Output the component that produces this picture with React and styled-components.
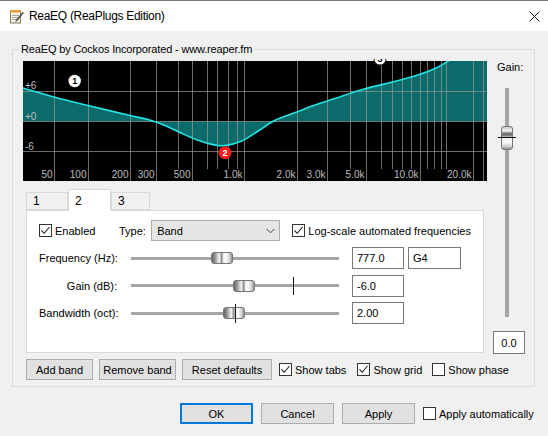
import styled, { createGlobalStyle } from "styled-components";

const GlobalStyle = createGlobalStyle`
  html, body { margin: 0; padding: 0; background: #f0f0f0; }
  body {
    font-family: "Liberation Sans", Arial, sans-serif;
    font-size: 11px;
    color: #000;
  }
`;

const Window = styled.div`
  width: 548px;
  height: 436px;
  display: flex;
  flex-direction: column;
  background: #f0f0f0;
  overflow: hidden;
`;

const TitleBar = styled.div`
  height: 30px;
  flex-shrink: 0;
  background: #fff;
  border-top: 1px solid #7a7a7a;
  display: flex;
  align-items: center;
  padding: 0 8px 0 9px;
`;

const TitleText = styled.span`
  flex: 1;
  margin-left: 5px;
  font-size: 12px;
  letter-spacing: -0.3px;
`;

const Group = styled.fieldset`
  margin: 12px 13px 0 12px;
  padding: 5px 3px 6px 10px;
  border: 1px solid #dcdcdc;
  min-width: 0;
`;

const Legend = styled.legend`
  padding: 0 2px;
  margin-left: -4px;
  line-height: 13px;
  letter-spacing: -0.15px;
`;

const GroupInner = styled.div`
  display: flex;
`;

const LeftCol = styled.div`
  width: 464px;
  flex-shrink: 0;
  display: flex;
  flex-direction: column;
`;

const RightCol = styled.div`
  width: 44px;
  display: flex;
  flex-direction: column;
  align-items: flex-start;
`;

const GraphSvg = styled.svg`
  display: block;
  overflow: visible;
`;

const TabStrip = styled.div`
  margin-top: 8px;
  height: 21px;
  display: flex;
  align-items: flex-end;
  padding-left: 3px;
`;

const Tab = styled.div`
  box-sizing: border-box;
  width: ${(p) => p.$w}px;
  height: ${(p) => (p.$active ? 22 : 18)}px;
  margin-bottom: ${(p) => (p.$active ? -1 : 0)}px;
  background: ${(p) => (p.$active ? "#fff" : "#f0f0f0")};
  border: 1px solid #d9d9d9;
  border-bottom: ${(p) => (p.$active ? "none" : "1px solid #d9d9d9")};
  position: relative;
  z-index: ${(p) => (p.$active ? 1 : 0)};
  display: flex;
  align-items: center;
  padding-left: 6px;
  font-size: 12px;
`;

const Panel = styled.div`
  margin: 0 3px;
  height: 143px;
  box-sizing: border-box;
  border: 1px solid #d9d9d9;
  background: #fff;
  padding: 9px 12px;
`;

const TopRow = styled.div`
  height: 21px;
  display: flex;
  align-items: center;
`;

const CheckLabel = styled.label`
  display: inline-flex;
  align-items: center;
  flex-shrink: 0;
  gap: 3px;
  width: ${(p) => (p.$w ? `${p.$w}px` : "auto")};
  margin-left: ${(p) => p.$ml || 0}px;
  white-space: nowrap;
`;

const Box = styled.span`
  width: 13px;
  height: 13px;
  box-sizing: border-box;
  border: 1px solid #333;
  background: #fff;
  display: inline-flex;
  align-items: center;
  justify-content: center;
  flex-shrink: 0;
`;

const TypeLabel = styled.span`
  width: 34px;
`;

const Dropdown = styled.div`
  width: 136px;
  height: 21px;
  box-sizing: border-box;
  background: #e5e5e5;
  border: 1px solid #adadad;
  display: flex;
  align-items: center;
  justify-content: space-between;
  padding: 0 4px 0 5px;
`;

const ParamGrid = styled.div`
  margin-top: 6px;
  display: grid;
  grid-template-columns: 79px 208px 52px 53px;
  grid-auto-rows: 22px;
  column-gap: 13px;
  row-gap: 5.5px;
  align-items: center;
  & > :nth-child(4n) { margin-left: -9px; }
`;

const ParamLabel = styled.span`
  text-align: right;
  padding-right: 1px;
  white-space: nowrap;
`;

const Track = styled.div`
  position: relative;
  height: 22px;
  display: flex;
  align-items: center;
  &::before {
    content: "";
    flex: 1;
    height: 3px;
    background: #a5a5a5;
  }
`;

const HThumb = styled.div`
  position: absolute;
  top: 5px;
  left: ${(p) => p.$left}px;
  width: 22px;
  height: 12px;
  box-sizing: border-box;
  border: 1px solid #767676;
  border-radius: 3px;
  background: linear-gradient(90deg, #6a6a6a 0%, #8e8e8e 14%, #d0d0d0 28%, #f4f4f4 38%, #8a8a8a 48%, #f2f2f2 58%, #fbfbfb 72%, #cfcfcf 88%, #909090 100%);
`;

const VTick = styled.div`
  position: absolute;
  left: ${(p) => p.$left}px;
  top: ${(p) => (22 - p.$h) / 2}px;
  width: 1px;
  height: ${(p) => p.$h}px;
  background: #111;
`;

const Field = styled.input`
  box-sizing: border-box;
  width: 100%;
  height: 22px;
  border: 1px solid #7a7a7a;
  background: #fff;
  font: inherit;
  padding: 0 4px;
  margin: 0;
  outline: none;
`;

const ButtonRow = styled.div`
  margin-top: 6px;
  height: 21px;
  display: flex;
  align-items: center;
  gap: 6px;
  padding-left: 3px;
`;

const Button = styled.button`
  box-sizing: border-box;
  flex-shrink: 0;
  width: ${(p) => p.$w}px;
  height: 21px;
  padding: 0;
  white-space: nowrap;
  font: inherit;
  color: #000;
  background: #e1e1e1;
  border: 1px solid ${(p) => (p.$default ? "#0078d7" : "#adadad")};
  box-shadow: ${(p) => (p.$default ? "inset 0 0 0 1px #0078d7" : "none")};
`;

const GainLabel = styled.span`
  margin-left: 10px;
  line-height: 13px;
`;

const VTrack = styled.div`
  position: relative;
  margin: 14px 0 0 18px;
  width: 4px;
  height: 229px;
  background: #a6a6a6;
`;

const VThumb = styled.div`
  position: absolute;
  left: -4px;
  top: 38px;
  width: 12px;
  height: 24px;
  box-sizing: border-box;
  border: 1px solid #767676;
  border-radius: 3px;
  background: linear-gradient(180deg, #c8c8c8 0%, #f4f4f4 18%, #6e6e6e 30%, #7c7c7c 38%, #f2f2f2 50%, #fafafa 70%, #cfcfcf 88%, #909090 100%);
`;

const HTick = styled.div`
  position: absolute;
  left: -7px;
  top: 49px;
  width: 18px;
  height: 1px;
  background: #111;
`;

const ValueBox = styled.div`
  margin: 14px 0 0 6px;
  width: 32px;
  height: 23px;
  box-sizing: border-box;
  border: 1px solid #7a7a7a;
  background: #fff;
  display: flex;
  align-items: center;
  justify-content: center;
`;

const DialogRow = styled.div`
  margin-top: 16px;
  height: 21px;
  display: flex;
  align-items: center;
  gap: 8px;
  padding-left: 180px;
`;

const Check = ({ checked, children, ...rest }) => (
  <CheckLabel {...rest}>
    <Box>
      {checked && (
        <svg width="11" height="11" viewBox="0 0 11 11">
          <path d="M1.5 5.5 L4.2 8.3 L9.5 2" fill="none" stroke="#222" strokeWidth="1.1" />
        </svg>
      )}
    </Box>
    {children}
  </CheckLabel>
);

// curve points relative to graph origin (23,61)
const CURVE = [
  [0, 27], [31, 36], [65, 44.5], [107, 54.5], [125, 58.6], [142, 64.5], [158, 72],
  [175, 79.3], [190, 83.6], [202, 84.6], [218.7, 80], [235.3, 70], [252, 59.3], [273.7, 51],
  [292, 44], [312, 37.5], [340.3, 28.3], [373.7, 20], [397, 13.3], [413.7, 6.7],
  [425.3, 0], [440, -10], [470, -30],
];

function smoothPath(pts) {
  let d = `M${pts[0][0]},${pts[0][1]}`;
  for (let i = 0; i < pts.length - 1; i++) {
    const p0 = pts[i - 1] || pts[i];
    const p1 = pts[i];
    const p2 = pts[i + 1];
    const p3 = pts[i + 2] || p2;
    const c1x = p1[0] + (p2[0] - p0[0]) / 6;
    const c1y = p1[1] + (p2[1] - p0[1]) / 6;
    const c2x = p2[0] - (p3[0] - p1[0]) / 6;
    const c2y = p2[1] - (p3[1] - p1[1]) / 6;
    d += ` C${c1x},${c1y} ${c2x},${c2y} ${p2[0]},${p2[1]}`;
  }
  return d;
}

const LABELED = [
  [54, "50"], [88, "100"], [129.7, "200"], [156.3, "300"], [192.3, "500"],
  [244.3, "1.0k"], [296.7, "2.0k"], [326.7, "3.0k"], [366, "5.0k"],
  [420, "10.0k"], [473.3, "20.0k"], [482.5, ""],
];
const MINOR = [177.5, 206.7, 217.3, 228.3, 236.7, 350, 380.5, 392.3, 402, 410.5, 426.7, 434.3, 440.5, 446];

function Graph() {
  const curve = smoothPath(CURVE);
  const fill = `${curve} L470,60.5 L0,60.5 Z`;
  const gx = (x) => Math.round(x - 23) + 0.5;
  return (
    <GraphSvg width="464" height="120" viewBox="0 0 464 120">
      <defs>
        <clipPath id="plot">
          <rect x="0" y="0" width="464" height="120" />
        </clipPath>
        <clipPath id="marks">
          <rect x="0" y="-2" width="464" height="122" />
        </clipPath>
      </defs>
      <rect x="0" y="0" width="464" height="120" fill="#000" />
      <g clipPath="url(#plot)">
        <path d={fill} fill="#0b6a6a" />
        {[30.5, 60.5, 90.5].map((y) => (
          <line key={y} x1="0" x2="464" y1={y} y2={y} stroke="rgba(150,150,150,0.72)" />
        ))}
        {LABELED.map(([x]) => (
          <line key={x} x1={gx(x)} x2={gx(x)} y1="0" y2="120" stroke="rgba(150,150,150,0.72)" />
        ))}
        {MINOR.map((x) => (
          <line key={x} x1={gx(x)} x2={gx(x)} y1="0" y2="108" stroke="rgba(150,150,150,0.72)" />
        ))}
        <path d={curve} fill="none" stroke="#22e4e4" strokeWidth="1.6" />
      </g>
      <g fontFamily="Liberation Sans, Arial, sans-serif" fontSize="10" fill="#bdbdbd">
        <text x="2" y="28">+6</text>
        <text x="2" y="59">+0</text>
        <text x="2" y="89">-6</text>
        {LABELED.map(([x, t]) =>
          t ? (
            <text key={t} x={gx(x) - 2} y="117" textAnchor="end">{t}</text>
          ) : null
        )}
      </g>
      <g
        clipPath="url(#marks)"
        fontFamily="Liberation Sans, Arial, sans-serif"
        fontSize="9"
        fontWeight="bold"
        textAnchor="middle"
      >
        <circle cx="51.7" cy="20" r="6.2" fill="#fff" />
        <text x="51.7" y="23.3" fill="#000">1</text>
        <circle cx="202" cy="91.7" r="6.5" fill="#ee1c1c" />
        <text x="202" y="95" fill="#fff">2</text>
        <circle cx="357" cy="-2" r="6" fill="#fff" stroke="#222" strokeWidth="1" />
        <text x="357" y="1.3" fill="#000">3</text>
      </g>
    </GraphSvg>
  );
}

const AppIcon = () => (
  <svg width="15" height="15" viewBox="0 0 15 15">
    <rect x="1.5" y="2.5" width="10" height="11.5" fill="#f6f1e2" stroke="#8a7a5c" />
    <rect x="1" y="1" width="11" height="2.5" fill="#e99a35" />
    <line x1="3" y1="6.5" x2="10" y2="6.5" stroke="#a9a9a9" />
    <line x1="3" y1="8.5" x2="10" y2="8.5" stroke="#a9a9a9" />
    <line x1="3" y1="10.5" x2="8" y2="10.5" stroke="#a9a9a9" />
    <path d="M13.8 3.2 L7.6 10.6 L6.6 12.4 L8.4 11.4 L14.6 4 Z" fill="#5a5a5a" stroke="#333" strokeWidth="0.5" />
  </svg>
);

const CloseIcon = () => (
  <svg width="11" height="11" viewBox="0 0 11 11">
    <path d="M0.5 0.5 L10.5 10.5 M10.5 0.5 L0.5 10.5" stroke="#111" strokeWidth="1" />
  </svg>
);

const Chevron = () => (
  <svg width="9" height="6" viewBox="0 0 9 6">
    <path d="M0.5 0.8 L4.5 4.8 L8.5 0.8" fill="none" stroke="#444" strokeWidth="1" />
  </svg>
);

export default function App() {
  return (
    <>
      <GlobalStyle />
      <Window>
        <TitleBar>
          <AppIcon />
          <TitleText>ReaEQ (ReaPlugs Edition)</TitleText>
          <CloseIcon />
        </TitleBar>

        <Group>
          <Legend>ReaEQ by Cockos Incorporated - www.reaper.fm</Legend>
          <GroupInner>
            <LeftCol>
              <Graph />
              <TabStrip>
                <Tab $w={42}>1</Tab>
                <Tab $w={43} $active>2</Tab>
                <Tab $w={39}>3</Tab>
              </TabStrip>
              <Panel>
                <TopRow>
                  <Check checked $w={80}>Enabled</Check>
                  <TypeLabel>Type:</TypeLabel>
                  <Dropdown>
                    <span>Band</span>
                    <Chevron />
                  </Dropdown>
                  <Check checked $ml={12}>Log-scale automated frequencies</Check>
                </TopRow>
                <ParamGrid>
                  <ParamLabel>Frequency (Hz):</ParamLabel>
                  <Track>
                    <HThumb $left={80} />
                  </Track>
                  <Field defaultValue="777.0" readOnly />
                  <Field defaultValue="G4" readOnly />

                  <ParamLabel>Gain (dB):</ParamLabel>
                  <Track>
                    <HThumb $left={101.6} />
                    <VTick $left={161.6} $h={18} />
                  </Track>
                  <Field defaultValue="-6.0" readOnly />
                  <span />

                  <ParamLabel>Bandwidth (oct):</ParamLabel>
                  <Track>
                    <HThumb $left={92.3} />
                    <VTick $left={104} $h={19} />
                  </Track>
                  <Field defaultValue="2.00" readOnly />
                  <span />
                </ParamGrid>
              </Panel>
              <ButtonRow>
                <Button $w={67}>Add band</Button>
                <Button $w={77}>Remove band</Button>
                <Button $w={90}>Reset defaults</Button>
                <Check checked $ml={1}>Show tabs</Check>
                <Check checked $ml={5}>Show grid</Check>
                <Check $ml={4}>Show phase</Check>
              </ButtonRow>
            </LeftCol>
            <RightCol>
              <GainLabel>Gain:</GainLabel>
              <VTrack>
                <VThumb />
                <HTick />
              </VTrack>
              <ValueBox>0.0</ValueBox>
            </RightCol>
          </GroupInner>
        </Group>

        <DialogRow>
          <Button $w={73} $default>OK</Button>
          <Button $w={73}>Cancel</Button>
          <Button $w={73}>Apply</Button>
          <Check>Apply automatically</Check>
        </DialogRow>
      </Window>
    </>
  );
}
